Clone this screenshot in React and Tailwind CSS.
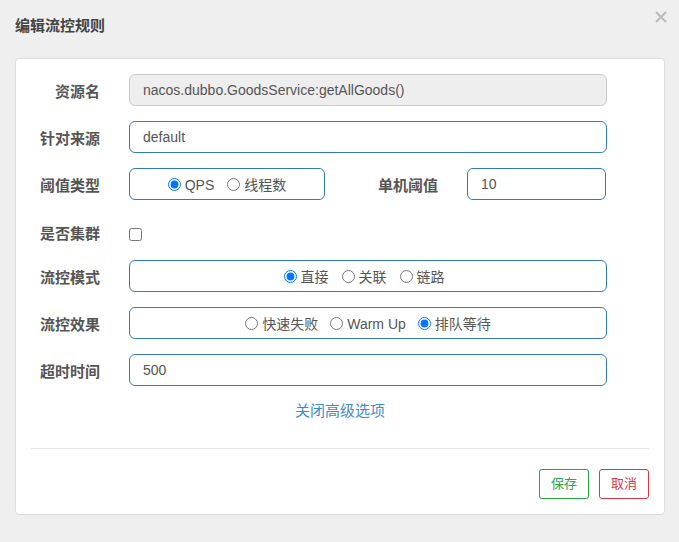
import React from "react";

const font = { fontFamily: '"Liberation Sans", "Noto Sans CJK SC", sans-serif' };

function Label({ children, className = "w-[84px]" }) {
    return (
        <div className={`${className} shrink-0 text-right text-[15px] font-bold text-[#555] leading-[20px]`}>
            {children}
        </div>
    );
}

function Radio({ name, label, checked }) {
    return (
        <label className="flex items-center text-[14px] text-[#555]">
            <input
                type="radio"
                name={name}
                defaultChecked={checked}
                className="w-[13px] h-[13px] mr-[4px] accent-[#0075ff]"
            />
            <span className="pt-[2px]">{label}</span>
        </label>
    );
}

function TextInput({ value, disabled, className = "w-[478px]" }) {
    return (
        <input
            type="text"
            defaultValue={value}
            disabled={disabled}
            className={
                disabled
                    ? `${className} h-[32px] ml-[29px] pl-[13px] rounded-[6px] border border-[#cccccc] bg-[#eeeeee] text-[14px] text-[#555] outline-none`
                    : `${className} h-[32px] ml-[29px] pl-[13px] rounded-[6px] border border-[#337ab7] bg-white text-[14px] text-[#555] outline-none`
            }
        />
    );
}

export default function App() {
    return (
        <div className="relative w-[679px] h-[542px] bg-[#efefef] overflow-hidden" style={font}>
            <div className="pt-[17px] pl-[15px] text-[15px] font-bold text-[#444] leading-[18px]">
                编辑流控规则
            </div>
            <button className="absolute right-[12px] top-[11px] w-[12px] h-[12px]">
                <svg width="12" height="12" viewBox="0 0 12 12">
                    <path d="M1 1 L11 11 M11 1 L1 11" stroke="#bbbbbb" strokeWidth="2" />
                </svg>
            </button>

            <div className="ml-[15px] mt-[23px] w-[650px] bg-white border border-[#dddddd] rounded-[4px] pt-[15px] pb-[15px]">
                <div className="flex items-center mb-[15px]">
                    <Label className="w-[84px] pt-[4px]">资源名</Label>
                    <TextInput value="nacos.dubbo.GoodsService:getAllGoods()" disabled />
                </div>

                <div className="flex items-center mb-[15px]">
                    <Label className="w-[84px] pt-[4px]">针对来源</Label>
                    <TextInput value="default" />
                </div>

                <div className="flex items-center mb-[15px]">
                    <Label className="w-[84px] pt-[4px]">阈值类型</Label>
                    <div className="ml-[29px] w-[196px] h-[32px] rounded-[6px] border border-[#337ab7] flex items-center justify-center gap-[13px]">
                        <Radio name="grade" label="QPS" checked />
                        <Radio name="grade" label="线程数" />
                    </div>
                    <Label className="w-[113px] pt-[4px]">单机阈值</Label>
                    <TextInput value="10" className="w-[139px]" />
                </div>

                <div className="flex items-center h-[38px] mb-[7px]">
                    <Label>是否集群</Label>
                    <input type="checkbox" className="ml-[29px] w-[13px] h-[13px]" />
                </div>

                <div className="flex items-center mb-[15px]">
                    <Label className="w-[84px] pt-[4px]">流控模式</Label>
                    <div className="ml-[29px] w-[478px] h-[32px] rounded-[6px] border border-[#337ab7] flex items-center justify-center gap-[13px] pr-[8px]">
                        <Radio name="strategy" label="直接" checked />
                        <Radio name="strategy" label="关联" />
                        <Radio name="strategy" label="链路" />
                    </div>
                </div>

                <div className="flex items-center mb-[15px]">
                    <Label className="w-[84px] pt-[4px]">流控效果</Label>
                    <div className="ml-[29px] w-[478px] h-[32px] rounded-[6px] border border-[#337ab7] flex items-center justify-center gap-[12px]">
                        <Radio name="behavior" label="快速失败" />
                        <Radio name="behavior" label="Warm Up" />
                        <Radio name="behavior" label="排队等待" checked />
                    </div>
                </div>

                <div className="flex items-center mb-[15px]">
                    <Label className="w-[84px] pt-[4px]">超时时间</Label>
                    <TextInput value="500" />
                </div>

                <div className="text-center leading-[20px]">
                    <a className="text-[15px] text-[#3c8dcd] cursor-pointer">关闭高级选项</a>
                </div>

                <div className="mx-[15px] mt-[27px] border-t border-[#e5e5e5]"></div>

                <div className="flex justify-end gap-[10px] mt-[20px] mr-[15px]">
                    <button className="w-[50px] h-[30px] rounded-[3px] border border-[#28a745] text-[13px] text-[#28a745] bg-white">
                        保存
                    </button>
                    <button className="w-[50px] h-[30px] rounded-[3px] border border-[#dc3545] text-[13px] text-[#dc3545] bg-white">
                        取消
                    </button>
                </div>
            </div>
        </div>
    );
}
